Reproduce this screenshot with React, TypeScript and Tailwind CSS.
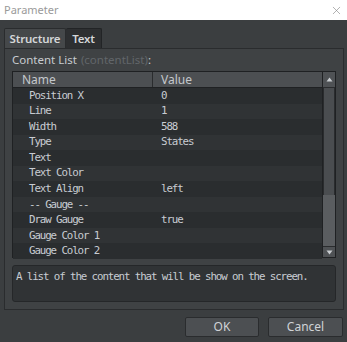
import { X } from "lucide-react";

const rows = [
  { name: "Position X", value: "0" },
  { name: "Line", value: "1" },
  { name: "Width", value: "588" },
  { name: "Type", value: "States" },
  { name: "Text", value: "" },
  { name: "Text Color", value: "" },
  { name: "Text Align", value: "left" },
  { name: "-- Gauge --", value: "" },
  { name: "Draw Gauge", value: "true" },
  { name: "Gauge Color 1", value: "" },
  { name: "Gauge Color 2", value: "" },
];

const sans = "font-['Noto_Sans','Open_Sans',sans-serif]";
const mono = "font-['DejaVu_Sans_Mono','Liberation_Mono',monospace] text-[10.8px] tracking-[-1.1px]";

export default function App() {
  return (
    <div className="w-[347px] h-[342px] flex flex-col bg-[#3b3e40] overflow-hidden">
      {/* Title bar */}
      <div className={`h-5 bg-white flex items-center justify-between pl-1 pr-1 ${sans}`}>
        <span className="text-[11px] text-[#9a9a9a]">Parameter</span>
        <X size={13} strokeWidth={1.2} className="text-[#8a8a8a]" />
      </div>

      <div className="flex-1 flex flex-col px-1 pt-2">
        {/* Tabs */}
        <div className={`flex h-5 ${sans} text-[11.5px] font-semibold tracking-[-0.2px]`}>
          <div className="w-[62px] flex items-center justify-center bg-[#45484a] border border-b-0 border-[#2a2c2e] rounded-t-[2px] text-[#d4d6d8]">
            Structure
          </div>
          <div className="w-9 flex items-center justify-center bg-[#2d2f31] border border-l-0 border-b-0 border-[#222426] rounded-t-[2px] text-[#d4d6d8]">
            Text
          </div>
        </div>

        {/* Panel */}
        <div className="h-[262px] w-[340px] border border-[#2a2c2e] bg-[#3f4244] flex flex-col px-[7px]">
          <div className={`h-[22px] flex items-end pb-[3px] text-[11.5px] ${sans}`}>
            <span className="text-[#c8ccd0]">Content List</span>
            <span className="text-[#62666a] ml-1">(contentList)</span>
            <span className="text-[#c8ccd0]">:</span>
          </div>

          {/* Table */}
          <div className="flex h-[187px] border border-[#1f2123] bg-[#2c2f31]">
            <div className="flex-1 flex flex-col">
              <div className={`h-4 flex bg-[#4c4f52] border-b border-[#1f2123] text-[12px] text-[#c4c8cc] ${sans}`}>
                <div className="w-[140px] pl-[9px] flex items-center border-r border-[#2a2c2e]">Name</div>
                <div className="flex-1 pl-2 flex items-center">Value</div>
              </div>
              {rows.map((r, i) => (
                <div
                  key={r.name}
                  className={`h-[15.55px] flex items-center text-[#c8ccd2] ${mono} ${i % 2 === 0 ? "bg-[#2a2d2f]" : "bg-[#303335]"}`}
                >
                  <div className="w-[140px] pl-[16px]">{r.name}</div>
                  <div className="flex-1 pl-2">{r.value}</div>
                </div>
              ))}
            </div>

            {/* Scrollbar */}
            <div className="w-[13px] flex flex-col bg-[#5a5d60] border-l border-[#1f2123]">
              <div className="h-4 flex items-center justify-center bg-[#4f5255] border-b border-[#2a2c2e]">
                <svg width="7" height="5" viewBox="0 0 7 5">
                  <path d="M3.5 0.5L6.5 4.5H0.5Z" fill="#c8ccd0" />
                </svg>
              </div>
              <div className="h-[107px] bg-[#4a4d50] border-x border-[#2a2c2e]" />
              <div className="flex-1" />
              <div className="h-[11px] flex items-center justify-center bg-[#4f5255] border-t border-[#2a2c2e]">
                <svg width="7" height="5" viewBox="0 0 7 5">
                  <path d="M0.5 0.5H6.5L3.5 4.5Z" fill="#c8ccd0" />
                </svg>
              </div>
            </div>
          </div>

          {/* Description */}
          <div className={`mt-[7px] h-[37px] rounded-[3px] border border-[#252729] bg-[#303335] px-[3px] pt-[3px] text-[#c8ccd2] ${mono}`}>
            A list of the content that will be show on the screen.
          </div>
        </div>

        {/* Buttons */}
        <div className={`flex justify-end gap-[9px] pt-[7px] text-[12px] ${sans}`}>
          <button className="w-[74px] h-5 bg-[#4c4f52] border border-[#2a2c2e] rounded-[2px] text-[#d0d3d6]">OK</button>
          <button className="w-[75px] h-5 bg-[#4c4f52] border border-[#2a2c2e] rounded-[2px] text-[#d0d3d6]">Cancel</button>
        </div>
      </div>
    </div>
  );
}
